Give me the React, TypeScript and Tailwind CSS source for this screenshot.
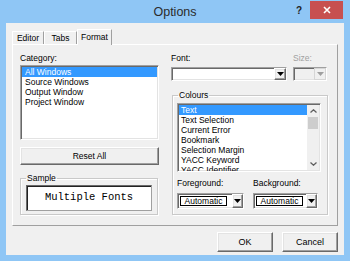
import React from 'react';

const sunken =
  'border border-t-[#a0a0a0] border-l-[#a0a0a0] border-b-white border-r-white shadow-[inset_1px_1px_0_#696969,inset_-1px_-1px_0_#e3e3e3]';
const raised =
  'border border-t-white border-l-white border-b-[#696969] border-r-[#696969] shadow-[inset_-1px_-1px_0_#a0a0a0,inset_1px_1px_0_#e3e3e3]';

const DownArrow: React.FC<{ color?: string }> = ({ color = '#000' }) => (
  <svg width="7" height="4" viewBox="0 0 7 4">
    <polygon points="0,0 7,0 3.5,4" fill={color} />
  </svg>
);

const ListBox: React.FC<{ items: string[]; className: string }> = ({ items, className }) => (
  <div className={`bg-white overflow-hidden ${sunken} ${className}`}>
    <div className="pt-[1px] px-[1px]">
      {items.map((item, i) => (
        <div
          key={item}
          className={`h-[10px] leading-[10px] pl-[3px] whitespace-nowrap ${
            i === 0 ? 'bg-[#3399ff] text-white' : 'text-black'
          }`}
        >
          {item}
        </div>
      ))}
    </div>
  </div>
);

const ColourCombo: React.FC<{ width: string }> = ({ width }) => (
  <div className={`flex h-[16px] bg-white ${sunken} ${width}`}>
    <div className="flex-1 flex items-center pl-[2px]">
      <div className="w-[47px] h-[10px] border border-black flex items-center justify-center leading-none">
        Automatic
      </div>
    </div>
    <div className={`w-[11px] flex items-center justify-center bg-[#f0f0f0] ${raised}`}>
      <DownArrow />
    </div>
  </div>
);

const Tab: React.FC<{ label: string; active?: boolean; width: string }> = ({ label, active, width }) => (
  <div
    className={`${width} flex items-center justify-center border-t border-l border-t-white border-l-white border-r border-r-[#a0a0a0] ${
      active ? 'h-[16px] bg-[#f0f0f0] -mb-[1px] relative' : 'h-[13px] bg-[#f0f0f0]'
    }`}
  >
    <span className="leading-none">{label}</span>
  </div>
);

export default function App() {
  return (
    <div className="w-[350px] h-[261px] bg-[#8fc6f5] flex flex-col font-['Liberation_Sans',Arial,sans-serif] text-[8.5px] text-black overflow-hidden">
      {/* title bar */}
      <div className="h-[23px] grid grid-cols-[1fr_auto_1fr]">
        <div />
        <div className="flex items-center pt-[1px] text-[12.5px] text-[#2b2b2b]">Options</div>
        <div className="flex justify-end items-start pr-[7px]">
          <span className="mt-[3px] mr-[8px] text-[10px] font-bold text-[#222]">?</span>
          <div className="mt-[1px] w-[33px] h-[18px] bg-[#c75050] flex items-center justify-center">
            <svg width="8" height="8" viewBox="0 0 8 8">
              <path d="M1 1 L7 7 M7 1 L1 7" stroke="#fff" strokeWidth="1.6" />
            </svg>
          </div>
        </div>
      </div>

      {/* client area */}
      <div className="mx-[6px] h-[232px] bg-[#f0f0f0] flex flex-col">
        <div className="mt-[5px] pl-[6px] flex items-end h-[16px]">
          <Tab label="Editor" width="w-[32px]" />
          <Tab label="Tabs" width="w-[33px]" />
          <Tab label="Format" width="w-[35px]" active />
        </div>

        <div className="mx-[6px] h-[182px] border border-t-white border-l-white border-b-[#a0a0a0] border-r-[#a0a0a0] flex pt-[8px] pl-[7px]">
          {/* left column */}
          <div className="w-[139px] flex flex-col">
            <div className="h-[10px] leading-[10px]">Category:</div>
            <ListBox
              className="mt-[2px] h-[75px]"
              items={['All Windows', 'Source Windows', 'Output Window', 'Project Window']}
            />
            <button className={`mt-[7px] h-[18px] bg-[#f0f0f0] ${raised} leading-none`}>Reset All</button>
            <fieldset className="mt-[8px] h-[42px] border border-[#c9c9c9] shadow-[inset_1px_1px_0_#fff,1px_1px_0_#fff] px-[5px] w-[138px]">
              <legend className="ml-0 px-[1px] leading-[10px]">Sample</legend>
              <div className="mt-[2px] h-[26px] bg-white border border-t-[#696969] border-l-[#696969] border-b-[#a0a0a0] border-r-[#a0a0a0] shadow-[inset_1px_1px_0_#222] flex items-center justify-center font-['Liberation_Mono',monospace] text-[10.5px]">
                Multiple Fonts
              </div>
            </fieldset>
          </div>

          {/* right column */}
          <div className="ml-[12px] w-[157px] flex flex-col">
            <div className="flex">
              <div className="w-[116px]">
                <div className="h-[10px] leading-[10px]">Font:</div>
                <div className={`mt-[4px] h-[14px] bg-white flex justify-end ${sunken}`}>
                  <div className={`w-[12px] flex items-center justify-center bg-[#f0f0f0] ${raised}`}>
                    <DownArrow />
                  </div>
                </div>
              </div>
              <div className="ml-[6px] w-[34px]">
                <div className="h-[10px] leading-[10px] text-[#a0a0a0]">Size:</div>
                <div className={`mt-[4px] h-[14px] bg-[#f0f0f0] flex justify-end ${sunken}`}>
                  <div className="w-[12px] flex items-center justify-center border border-[#d6d6d6]">
                    <DownArrow color="#a0a0a0" />
                  </div>
                </div>
              </div>
            </div>

            <fieldset className="mt-[9px] ml-[1px] h-[125px] w-[156px] border border-[#c9c9c9] shadow-[inset_1px_1px_0_#fff,1px_1px_0_#fff] pl-[4px]">
              <legend className="ml-[1px] px-[1px] leading-[10px]">Colours</legend>
              <div className={`mt-[3px] w-[144px] h-[69px] bg-white flex ${sunken}`}>
                <div className="flex-1 overflow-hidden pt-[1px] pl-[1px]">
                  {[
                    'Text',
                    'Text Selection',
                    'Current Error',
                    'Bookmark',
                    'Selection Margin',
                    'YACC Keyword',
                    'YACC Identifier',
                  ].map((item, i) => (
                    <div
                      key={item}
                      className={`h-[10px] leading-[10px] pl-[2px] whitespace-nowrap ${
                        i === 0 ? 'bg-[#3399ff] text-white' : ''
                      }`}
                    >
                      {item}
                    </div>
                  ))}
                </div>
                <div className="w-[12px] bg-[#f0f0f0] flex flex-col items-center mr-[1px] my-[1px]">
                  <div className="h-[12px] flex items-center justify-center">
                    <svg width="7" height="4" viewBox="0 0 7 4">
                      <polyline points="0.5,3.5 3.5,0.8 6.5,3.5" fill="none" stroke="#606060" strokeWidth="1.3" />
                    </svg>
                  </div>
                  <div className="w-[10px] h-[12px] bg-[#cdcdcd]" />
                  <div className="flex-1" />
                  <div className="h-[12px] flex items-center justify-center">
                    <svg width="7" height="4" viewBox="0 0 7 4">
                      <polyline points="0.5,0.5 3.5,3.2 6.5,0.5" fill="none" stroke="#606060" strokeWidth="1.3" />
                    </svg>
                  </div>
                </div>
              </div>
              <div className="mt-[6px] flex">
                <div className="w-[76px]">
                  <div className="h-[10px] leading-[10px]">Foreground:</div>
                  <div className="mt-[5px]">
                    <ColourCombo width="w-[67px]" />
                  </div>
                </div>
                <div className="w-[66px]">
                  <div className="h-[10px] leading-[10px]">Background:</div>
                  <div className="mt-[5px]">
                    <ColourCombo width="w-[65px]" />
                  </div>
                </div>
              </div>
            </fieldset>
          </div>
        </div>

        <div className="mt-[6px] pr-[6px] flex justify-end gap-[9px]">
          <button className={`w-[56px] h-[20px] bg-[#f0f0f0] ${raised} leading-none text-[9px]`}>OK</button>
          <button className={`w-[56px] h-[20px] bg-[#f0f0f0] ${raised} leading-none text-[9px]`}>Cancel</button>
        </div>
      </div>
    </div>
  );
}
